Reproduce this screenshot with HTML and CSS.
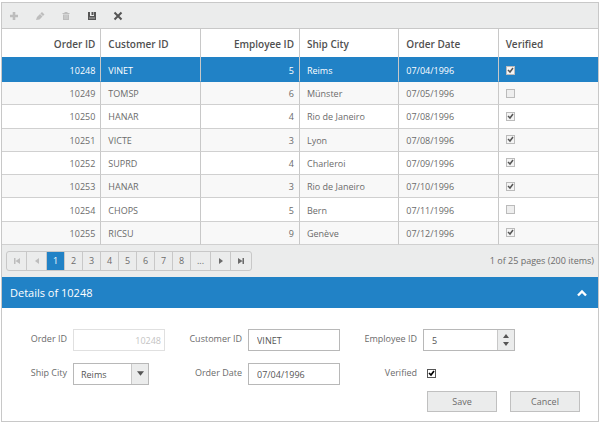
FILE: index.html
```html
<!DOCTYPE html>
<html lang="en">
<head>
<meta charset="utf-8">
<title>Orders</title>
<link rel="stylesheet" href="styles.css">
</head>
<body>
<main class="grid">
  <div class="toolbar" role="toolbar" aria-label="Order actions">
    <button type="button" class="tool" aria-label="Add" disabled><svg viewBox="0 0 12 12"><path d="M6 2v8M2 6h8" fill="none" stroke="currentColor" stroke-width="2.6"/></svg></button>
    <button type="button" class="tool" aria-label="Edit" disabled><svg viewBox="0 0 12 12"><path d="M2 10l1-3 3-3 2.500 2.500-3 3zM6.400 3.600L8 2l2.500 2.500-1.600 1.600z" fill="currentColor"/></svg></button>
    <button type="button" class="tool" aria-label="Delete" disabled><svg viewBox="0 0 12 12"><path d="M2.500 3h2V2h3v1h2v1h-7zM3 4.500h6V10H3z" fill="currentColor"/><path d="M4 6h4M4 8h4" stroke="#ebecec" stroke-width=".5"/></svg></button>
    <button type="button" class="tool" aria-label="Save changes"><svg viewBox="0 0 12 12"><path d="M2 2h2v4h4V2h2v8H2zM5.500 2h2v3h-2z" fill="currentColor"/><path d="M3 8h6" stroke="#ebecec" stroke-width=".6"/></svg></button>
    <button type="button" class="tool" aria-label="Cancel changes"><svg viewBox="0 0 12 12"><path d="M2.500 2.500l7 7M9.500 2.500l-7 7" fill="none" stroke="currentColor" stroke-width="2"/></svg></button>
  </div>

  <table class="orders">
    <thead>
      <tr><th class="num">Order ID</th><th>Customer ID</th><th class="num">Employee ID</th><th>Ship City</th><th>Order Date</th><th>Verified</th></tr>
    </thead>
    <tbody>
      <tr class="selected"><td class="num">10248</td><td>VINET</td><td class="num">5</td><td>Reims</td><td>07/04/1996</td><td><input type="checkbox" class="check" aria-label="Verified 10248" checked disabled></td></tr>
      <tr><td class="num">10249</td><td>TOMSP</td><td class="num">6</td><td>Münster</td><td>07/05/1996</td><td><input type="checkbox" class="check" aria-label="Verified 10249" disabled></td></tr>
      <tr><td class="num">10250</td><td>HANAR</td><td class="num">4</td><td>Rio de Janeiro</td><td>07/08/1996</td><td><input type="checkbox" class="check" aria-label="Verified 10250" checked disabled></td></tr>
      <tr><td class="num">10251</td><td>VICTE</td><td class="num">3</td><td>Lyon</td><td>07/08/1996</td><td><input type="checkbox" class="check" aria-label="Verified 10251" checked disabled></td></tr>
      <tr><td class="num">10252</td><td>SUPRD</td><td class="num">4</td><td>Charleroi</td><td>07/09/1996</td><td><input type="checkbox" class="check" aria-label="Verified 10252" checked disabled></td></tr>
      <tr><td class="num">10253</td><td>HANAR</td><td class="num">3</td><td>Rio de Janeiro</td><td>07/10/1996</td><td><input type="checkbox" class="check" aria-label="Verified 10253" checked disabled></td></tr>
      <tr><td class="num">10254</td><td>CHOPS</td><td class="num">5</td><td>Bern</td><td>07/11/1996</td><td><input type="checkbox" class="check" aria-label="Verified 10254" disabled></td></tr>
      <tr><td class="num">10255</td><td>RICSU</td><td class="num">9</td><td>Genève</td><td>07/12/1996</td><td><input type="checkbox" class="check" aria-label="Verified 10255" checked disabled></td></tr>
    </tbody>
  </table>

  <div class="pager">
    <nav class="pages" aria-label="Pages">
      <button type="button" class="step" aria-label="First page" disabled><svg viewBox="0 0 6 6"><path d="M0 0h1.500v6H0zM6 0v6L1.500 3z" fill="currentColor"/></svg></button>
      <button type="button" class="step" aria-label="Previous page" disabled><svg viewBox="0 0 6 6"><path d="M5 0v6L1 3z" fill="currentColor"/></svg></button>
      <button type="button" class="current" aria-current="page">1</button>
      <button type="button">2</button>
      <button type="button">3</button>
      <button type="button">4</button>
      <button type="button">5</button>
      <button type="button">6</button>
      <button type="button">7</button>
      <button type="button">8</button>
      <button type="button" class="step">...</button>
      <button type="button" class="step" aria-label="Next page"><svg viewBox="0 0 6 6"><path d="M1 0v6l4-3z" fill="currentColor"/></svg></button>
      <button type="button" class="step" aria-label="Last page"><svg viewBox="0 0 6 6"><path d="M4.500 0H6v6H4.500zM0 0v6l4.500-3z" fill="currentColor"/></svg></button>
    </nav>
    <span>1 of 25 pages (200 items)</span>
  </div>

  <section class="details">
    <header class="details-head">
      <h2>Details of 10248</h2>
      <button type="button" class="collapse" aria-label="Collapse"><svg viewBox="0 0 10 8"><path d="M1 6.500l4-4 4 4" fill="none" stroke="currentColor" stroke-width="2.4"/></svg></button>
    </header>
    <form class="form">
      <div class="fields">
        <div class="field"><label for="order">Order ID</label><input id="order" class="box num" value="10248" disabled></div>
        <div class="field"><label for="customer">Customer ID</label><input id="customer" class="box" value="VINET"></div>
        <div class="field"><label for="employee">Employee ID</label>
          <div class="box combo spinner"><input id="employee" value="5">
            <span class="arrows"><button type="button" aria-label="Increase"><svg viewBox="0 0 6 4"><path d="M0 4l3-4 3 4z" fill="currentColor"/></svg></button><button type="button" aria-label="Decrease"><svg viewBox="0 0 6 4"><path d="M0 0l3 4 3-4z" fill="currentColor"/></svg></button></span>
          </div>
        </div>
        <div class="field"><label for="city">Ship City</label>
          <div class="box combo city"><select id="city"><option>Reims</option><option>Bern</option><option>Lyon</option></select>
            <span class="arrows"><svg viewBox="0 0 6 4"><path d="M0 0l3 4 3-4z" fill="currentColor"/></svg></span>
          </div>
        </div>
        <div class="field"><label for="date">Order Date</label><input id="date" class="box" value="07/04/1996"></div>
        <div class="field"><label for="verified">Verified</label><input id="verified" type="checkbox" class="check strong" checked></div>
      </div>
      <div class="actions"><button type="submit">Save</button><button type="button">Cancel</button></div>
    </form>
  </section>
</main>
</body>
</html>
```
FILE: styles.css
```css
* { box-sizing: border-box; }
body { margin: 0; background: #fff; color: #6b6b6b; font: 9px/12px "Open Sans", "Noto Sans", sans-serif; }
button, input, select { margin: 0; padding: 0; border: 0; border-radius: 0; background: none; color: inherit; font: inherit; }
svg { display: block; }

.grid { margin: 2px 2px 0 1px; border: 1px solid #c8c8c8; }
.toolbar { display: flex; align-items: center; gap: 14px; height: 26px; padding: 0 6px; background: #ebecec; border-bottom: 1px solid #c8c8c8; }
.tool { width: 12px; height: 12px; color: #555; }
.tool svg { width: 12px; height: 12px; }
.tool:disabled { color: #bdbdbd; }

.orders { width: 100%; height: 216px; table-layout: fixed; border-collapse: separate; border-spacing: 0; }
th, td { padding: 2px 5px 0 7px; border-right: 1px solid #c8c8c8; border-bottom: 1px solid #d0d0d0; text-align: left; white-space: nowrap; }
th:last-child, td:last-child { border-right: 0; }
th { height: 28px; border-bottom: 0; color: #505050; font-size: 10px; font-weight: 600; }
.orders tbody tr:nth-child(even) { background: #f8f8f8; }
.orders .selected { background: #2182c6; color: #fff; }
.selected td { height: 25px; padding-top: 4px; border-bottom-color: #2182c6; }
.orders .num { text-align: right; }

.check { appearance: none; display: block; width: 9px; height: 9px; border: 1px solid #bbb; background: #eee; }
.check:checked { background: #f4f4f4 url("data:image/svg+xml,%3Csvg xmlns='http://www.w3.org/2000/svg' viewBox='0 0 7 7'%3E%3Cpath d='M1 3l2 2 3-4' fill='none' stroke='%23555' stroke-width='1.5'/%3E%3C/svg%3E") center / 7px 7px; }
.strong.check { border-color: #555; background: #fff url("data:image/svg+xml,%3Csvg xmlns='http://www.w3.org/2000/svg' viewBox='0 0 7 7'%3E%3Cpath d='M1 3l2 2 3-4' fill='none' stroke='%23000' stroke-width='1.7'/%3E%3C/svg%3E") center / 7px 7px; }
td .check { margin-bottom: 2px; }

.pager { display: flex; align-items: center; justify-content: space-between; height: 32px; padding: 0 4px; background: #ebecec; }
.pages { display: flex; border: 1px solid #c8c8c8; border-radius: 3px; }
.pages button { display: grid; place-items: center; width: 18px; height: 18px; border-right: 1px solid #c8c8c8; }
.pages .step { width: 20px; }
.pages button:last-child { border-right: 0; }
.pages .current { background: #2182c6; color: #fff; }
.pages button:disabled { color: #bdbdbd; }
.pages svg { width: 6px; height: 6px; }

.details-head { display: flex; align-items: center; justify-content: space-between; height: 31px; padding: 0 11px 0 8px; background: #2182c6; color: #fff; }
h2 { margin: 0; font-size: 11px; font-weight: 400; }
.collapse svg { width: 10px; height: 8px; }

.form { padding: 20px 0 9px; }
.fields { display: grid; grid-template-columns: 175fr 175fr 246fr; row-gap: 11px; }
.field { display: flex; align-items: center; gap: 6px; height: 23px; }
.field label { width: 65px; padding-bottom: 2px; text-align: right; white-space: nowrap; }
.box { width: 92px; height: 22px; padding: 2px 8px 0; border: 1px solid #b8b8b8; color: #555; }
.box.num { padding: 2px 3px 0; text-align: right; }
.box:disabled { border-color: #e0e0e0; color: #c4c4c4; }
.combo { display: flex; padding: 0; }
.combo input, .combo select { flex: 1; min-width: 0; padding: 2px 8px 0; appearance: none; }
.city { width: 76px; }
.city select { padding-left: 7px; }
.arrows { display: flex; flex-direction: column; align-items: center; justify-content: space-evenly; width: 17px; border-left: 1px solid #c8c8c8; background: #ebecec; }
.arrows svg { width: 7px; height: 5px; }
.spinner .arrows svg { width: 6px; height: 4px; }
.field .check { margin-left: 4px; }

.actions { display: flex; justify-content: flex-end; gap: 13px; margin-top: 6px; padding-right: 18px; }
.actions button { width: 70px; height: 21px; border: 1px solid #c0c0c0; background: #ebecec; }
```
